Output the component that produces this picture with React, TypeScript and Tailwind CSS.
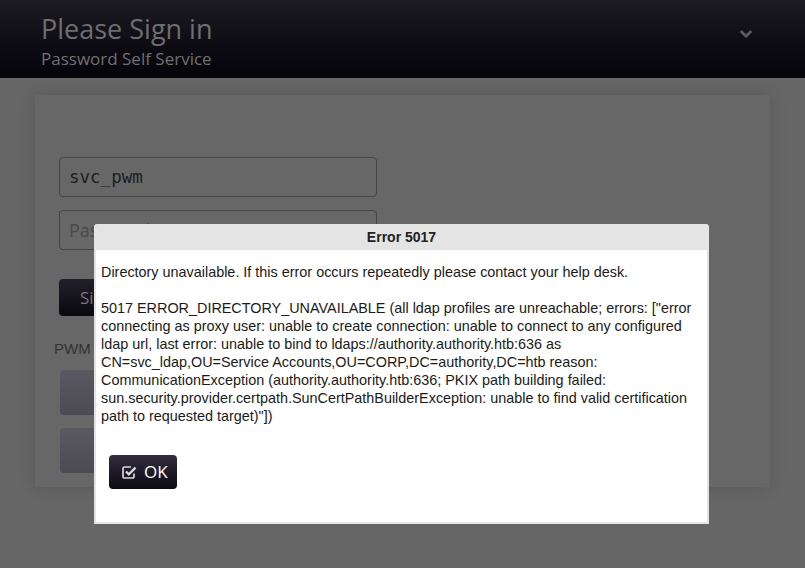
import { ChevronDown } from "lucide-react";

function CheckSquare() {
  return (
    <svg width="16" height="16" viewBox="0 0 16 16" fill="none" className="text-[#d8d6de]">
      <path d="M13 9.5v3a1.5 1.5 0 0 1-1.5 1.5h-8A1.5 1.5 0 0 1 2 12.5v-8A1.5 1.5 0 0 1 3.5 3H10" stroke="currentColor" strokeWidth="1.7" />
      <path d="M5 7.5l2.8 2.8L14.5 3.6" stroke="currentColor" strokeWidth="2.3" />
    </svg>
  );
}

export default function App() {
  return (
    <div className="relative min-h-[568px] bg-[#666666] font-['Open_Sans',sans-serif]">
      <header className="flex h-[78px] items-start justify-between bg-gradient-to-b from-[#1c1b22] to-[#050409] pl-[41px] pr-[50px]">
        <div className="pt-[10px]">
          <h1 className="text-[27px] leading-[38px] text-[#6e6e6e]">Please Sign in</h1>
          <p className="text-[17px] leading-[22px] text-[#707070]">Password Self Service</p>
        </div>
        <ChevronDown size={18} strokeWidth={3.5} className="mt-[25px] text-[#5c5c5c]" />
      </header>

      <main className="px-[35px] pt-[17px]">
        <div className="h-[392px] bg-[#676767] px-[24px] pt-[62px] shadow-[0_0_16px_rgba(0,0,0,0.14)]">
          <div className="flex w-[318px] flex-col gap-[13px]">
            <div className="flex h-[40px] items-center rounded-[4px] border border-[#454545] px-[9px] font-['DejaVu_Sans_Mono',monospace] text-[17.5px] text-[#1e1e1e]">
              svc_pwm
            </div>
            <div className="flex h-[40px] items-center rounded-[4px] border border-[#454545] px-[9px] text-[18px] text-[#4a4a4a]">
              Password
            </div>
          </div>
          <button className="mt-[29px] h-[37px] w-[110px] rounded-[4px] bg-gradient-to-b from-[#221f2a] to-[#0a090e] pl-[21px] text-left text-[17px] text-[#777777]">
            Sign in
          </button>
          <p className="-ml-[5px] mt-[24px] font-['Liberation_Sans',sans-serif] text-[15px] leading-[18px] text-[#333333]">
            PWM
          </p>
          <div className="mt-[12px] flex w-[300px] flex-col gap-[13px] pl-[1px]">
            <div className="h-[45px] rounded-[4px] bg-gradient-to-b from-[#5a5860] to-[#4c4a52]" />
            <div className="h-[45px] rounded-[4px] bg-gradient-to-b from-[#5a5860] to-[#4c4a52]" />
          </div>
        </div>
      </main>

      <div className="absolute left-[94px] top-[224px] flex h-[300px] w-[615px] flex-col rounded-t-[3px] bg-[#e4e4e4] px-[2px] pb-[2px] font-['Liberation_Sans',sans-serif] text-[#1a1a1a]">
        <div className="flex h-[26px] items-center justify-center text-[14px] font-bold text-[#222222]">
          Error 5017
        </div>
        <div className="flex-1 bg-white px-[5px] pt-[13px]">
          <p className="w-[600px] text-[14.4px] leading-[18px]">
            Directory unavailable. If this error occurs repeatedly please contact your help desk.
            <br />
            <br />
            5017 ERROR_DIRECTORY_UNAVAILABLE (all ldap profiles are unreachable; errors: ["error connecting as proxy user: unable to create connection: unable to connect to any configured ldap url, last error: unable to bind to ldaps://authority.authority.htb:636 as CN=svc_ldap,OU=Service Accounts,OU=CORP,DC=authority,DC=htb reason: CommunicationException (authority.authority.htb:636; PKIX path building failed: sun.security.provider.certpath.SunCertPathBuilderException: unable to find valid certification path to requested target)"])
          </p>
          <button className="ml-[8px] mt-[30px] flex h-[34px] w-[68px] items-center gap-[7px] rounded-[4px] bg-gradient-to-b from-[#342e42] to-[#0b0a11] pl-[12px] font-['Open_Sans',sans-serif] text-[17px] text-white">
            <CheckSquare />
            OK
          </button>
        </div>
      </div>
    </div>
  );
}
